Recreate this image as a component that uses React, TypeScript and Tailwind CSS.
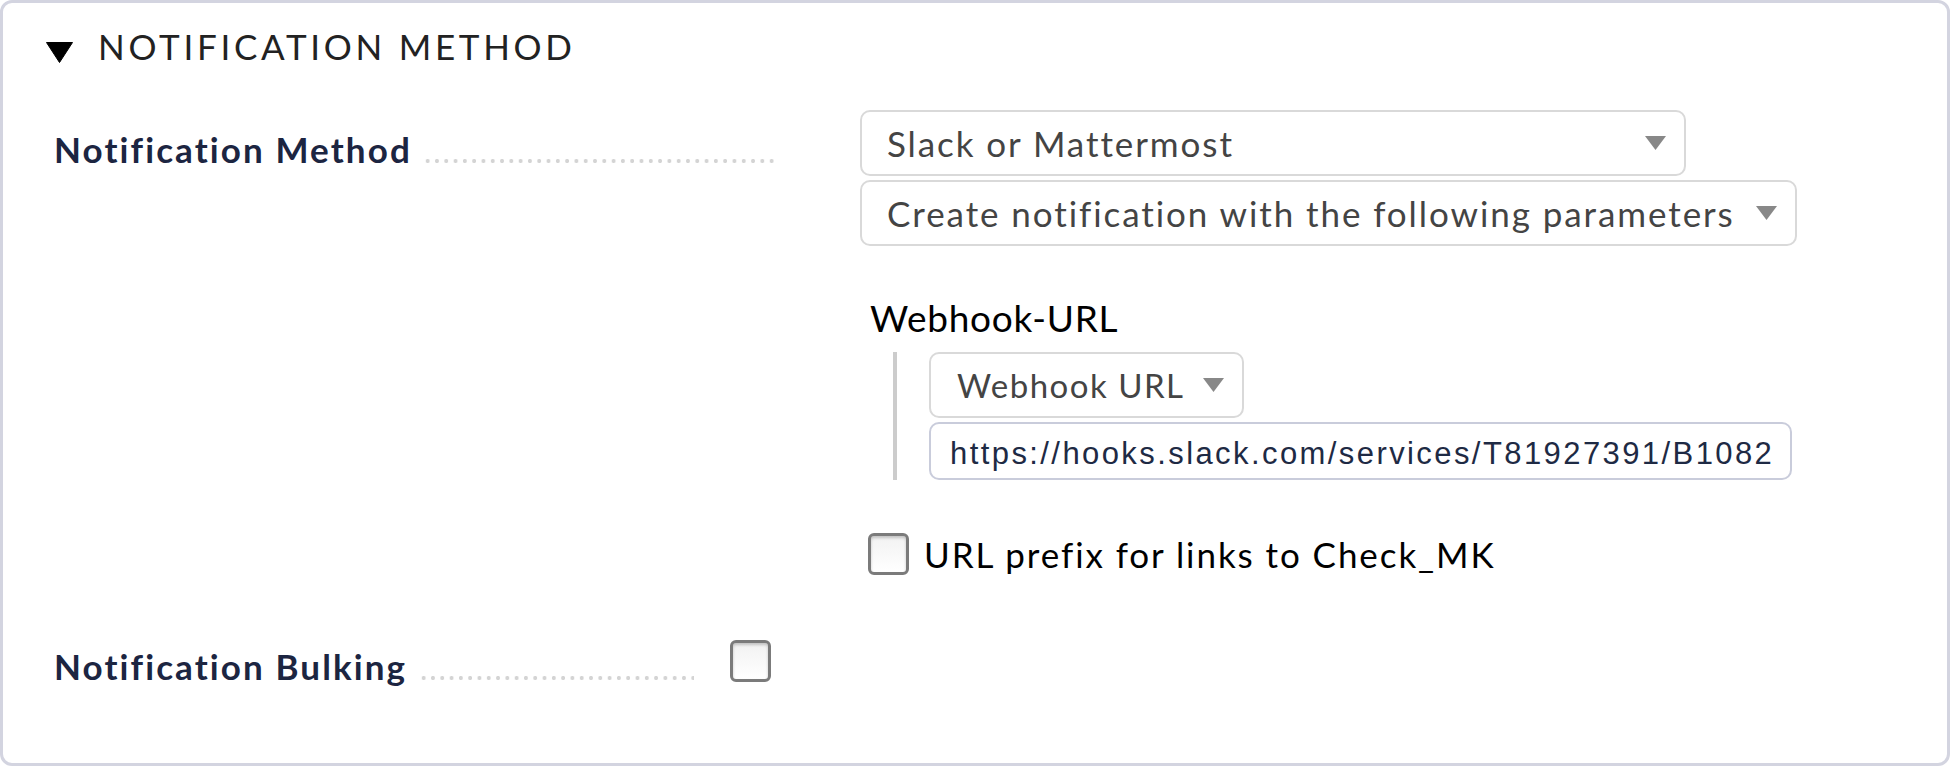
import React from 'react'

function Caret({ className }: { className?: string }) {
  return (
    <svg width="21" height="14" viewBox="0 0 21 14" className={className}>
      <polygon points="0,0 21,0 10.5,14" fill="#888888" />
    </svg>
  )
}

function Select({ label, className }: { label: string; className: string }) {
  return (
    <div
      className={`flex items-center justify-between h-[66px] border-2 border-[#d9d9d9] rounded-[10px] bg-white pr-[18px] leading-[40px] text-[#444444] ${className}`}
    >
      <span className="whitespace-nowrap">{label}</span>
      <Caret className="shrink-0" />
    </div>
  )
}

function Checkbox() {
  return (
    <div className="w-[41px] h-[42px] shrink-0 rounded-[6px] border-[3px] border-[#7b7b7b] bg-gradient-to-b from-[#f2f2f2] to-white shadow-[inset_0_2px_3px_rgba(0,0,0,0.2)]" />
  )
}

function Dots({ className }: { className?: string }) {
  return (
    <div
      className={`h-[4px] bg-[radial-gradient(circle,#d4d4d4_1.8px,transparent_2.3px)] bg-[length:9.3px_4px] bg-repeat-x ${className ?? ''}`}
    />
  )
}

export default function App() {
  return (
    <div className="w-[1950px] h-[766px] border-[3px] border-[#d3d4e0] rounded-[12px] bg-white pt-[23px] font-[Lato,sans-serif]">
      {/* header */}
      <div className="flex items-start h-[40px] pl-[43px]">
        <svg width="27" height="21" viewBox="0 0 27 21" className="mt-[16px] shrink-0">
          <polygon points="0.5,0.5 26.5,0.5 13.5,20.5" fill="#000000" stroke="#000000" strokeLinejoin="round" />
        </svg>
        <span className="ml-[25px] text-[35px] leading-[40px] tracking-[0.106em] text-[#222222]">
          NOTIFICATION METHOD
        </span>
      </div>

      {/* notification method row */}
      <div className="flex items-start mt-[44px] pl-[51px]">
        <div className="flex items-baseline w-[723px] pt-[19px]">
          <span className="text-[35px] leading-[40px] font-bold tracking-[0.06em] text-[#1c2541] whitespace-nowrap">
            Notification Method
          </span>
          <Dots className="flex-1 ml-[11px]" />
        </div>
        <div className="ml-[83px] flex flex-col items-start">
          <Select label="Slack or Mattermost" className="w-[826px] pl-[25px] text-[35px] tracking-[0.055em]" />
          <Select
            label="Create notification with the following parameters"
            className="w-[937px] pl-[25px] mt-[4px] text-[35px] tracking-[0.055em]"
          />

          <div className="mt-[52px] ml-[10px] text-[37px] leading-[40px] tracking-[0.02em] text-black">
            Webhook-URL
          </div>

          <div className="flex mt-[14px] ml-[33px]">
            <div className="w-[4px] bg-[#cccccc]" />
            <div className="ml-[32px] flex flex-col items-start">
              <Select label="Webhook URL" className="w-[315px] pl-[26px] text-[33px] tracking-[0.045em]" />
              <div className="mt-[4px] w-[863px] h-[58px] border-2 border-[#c9ccdb] rounded-[10px] bg-white pl-[19px] flex items-center">
                <span className="mt-[7px] whitespace-nowrap font-['Liberation_Sans',Arial,sans-serif] text-[31px] tracking-[0.078em] text-[#1e2a44]">
                  https://hooks.slack.com/services/T81927391/B1082
                </span>
              </div>
            </div>
          </div>

          <div className="flex items-center mt-[53px] ml-[8px]">
            <Checkbox />
            <span className="ml-[15px] text-[35px] leading-[40px] tracking-[0.055em] text-black whitespace-nowrap">
              URL prefix for links to Check_MK
            </span>
          </div>
        </div>
      </div>

      {/* bulking row */}
      <div className="flex items-start mt-[64px] pl-[51px]">
        <div className="flex items-baseline w-[640px] pt-[7px]">
          <span className="text-[35px] leading-[40px] font-bold tracking-[0.06em] text-[#1c2541] whitespace-nowrap">
            Notification Bulking
          </span>
          <Dots className="flex-1 ml-[12px]" />
        </div>
        <div className="ml-[36px] mt-[1px]">
          <Checkbox />
        </div>
      </div>
    </div>
  )
}
